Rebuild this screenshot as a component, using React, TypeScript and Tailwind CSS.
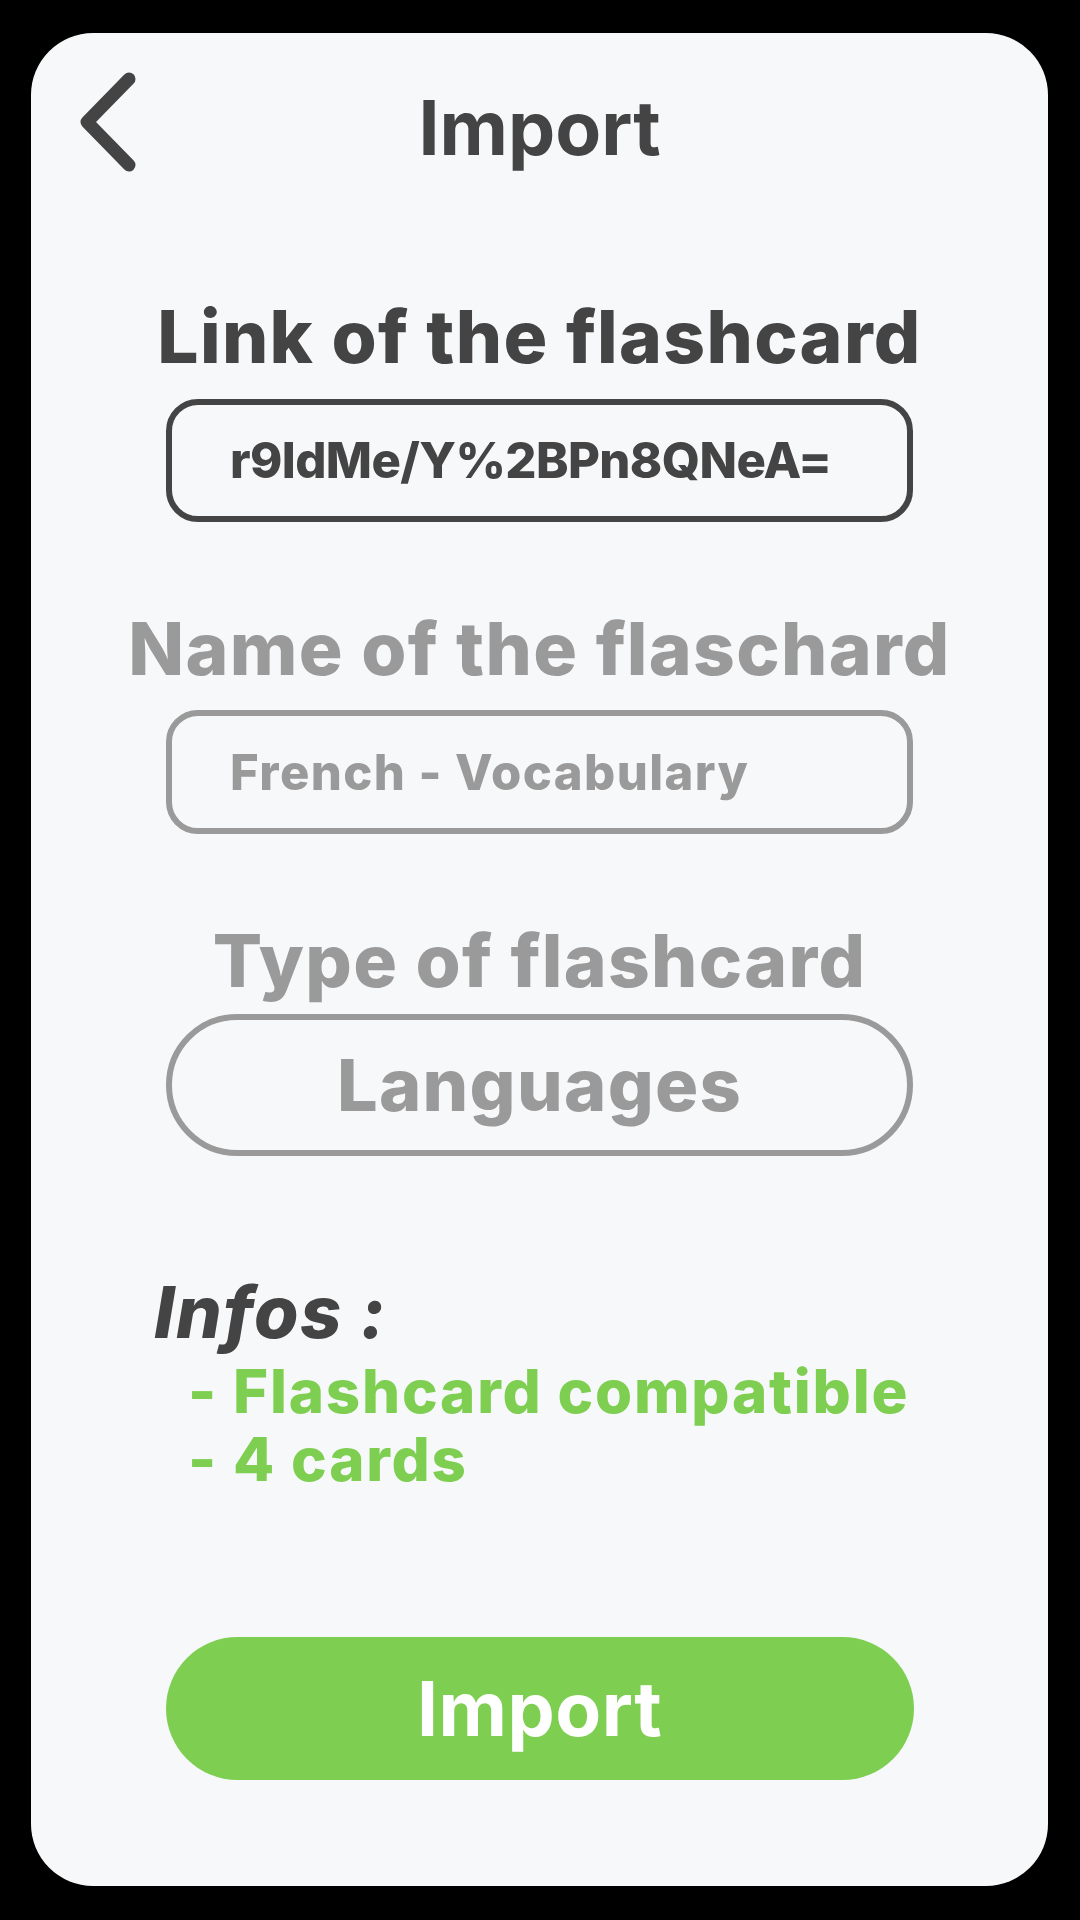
import React from "react";

const dark = "text-[#444444]";
const font = "font-['Inter','Roboto',sans-serif]";
const inputFont = "font-['Inter','Noto_Sans',sans-serif]";

const BackChevron = () => (
  <svg width="80" height="116" viewBox="0 0 80 116" fill="none">
    <polyline
      points="63,15 21,58 63,101"
      stroke="#444444"
      strokeWidth={13}
      strokeLinecap="round"
      strokeLinejoin="round"
    />
  </svg>
);

const App = () => {
  return (
    <div className="w-[1080px] h-[1920px] bg-black pt-[33px] pl-[31px]">
      <div className={`w-[1017px] h-[1853px] bg-[#f7f8fa] rounded-[62px] flex flex-col ${font}`}>
        {/* Header */}
        <div className="grid grid-cols-[1fr_auto_1fr] items-start pt-[31px] pl-[35px] pr-[35px]">
          <div className="flex">
            <BackChevron />
          </div>
          <h1 className={`mt-[26px] text-[75px] leading-none font-bold ${dark}`}>Import</h1>
          <div />
        </div>

        {/* Link */}
        <h2 className={`mt-[120px] text-center text-[73px] leading-none font-extrabold tracking-[1.3px] ${dark}`}>
          Link of the flashcard
        </h2>
        <div className="mt-[26px] mx-auto w-[747px] h-[123px] border-[6px] border-[#444444] rounded-[32px] flex items-center pl-[58px]">
          <span className={`text-[49px] leading-none font-extrabold tracking-[-0.6px] ${dark} ${inputFont}`}>
            r9IdMe/Y%2BPn8QNeA=
          </span>
        </div>

        {/* Name */}
        <h2 className="mt-[90px] text-center text-[73px] leading-none font-extrabold tracking-[1.3px] text-[#9a9a9a]">
          Name of the flaschard
        </h2>
        <div className="mt-[25px] mx-auto w-[747px] h-[124px] border-[6px] border-[#9a9a9a] rounded-[32px] flex items-center pl-[58px]">
          <span className={`text-[49px] leading-none font-extrabold tracking-[1.4px] text-[#9a9a9a] ${inputFont}`}>
            French - Vocabulary
          </span>
        </div>

        {/* Type */}
        <h2 className="mt-[90px] text-center text-[73px] leading-none font-extrabold tracking-[1.3px] text-[#9a9a9a]">
          Type of flashcard
        </h2>
        <div className="mt-[17px] mx-auto w-[747px] h-[142px] border-[6px] border-[#9a9a9a] rounded-full flex items-center justify-center">
          <span className="text-[72px] leading-none font-extrabold tracking-[1.3px] text-[#9a9a9a]">Languages</span>
        </div>

        {/* Infos */}
        <p className={`mt-[120px] ml-[123px] text-[72px] leading-none font-extrabold italic tracking-[1.5px] ${dark}`}>
          Infos :
        </p>
        <ul className="mt-[9px] ml-[157px] text-[60px] leading-[68px] font-extrabold tracking-[1.8px] text-[#7ecf51]">
          <li>- Flashcard compatible</li>
          <li>- 4 cards</li>
        </ul>

        {/* Import button */}
        <button className="mt-[144px] mx-auto w-[748px] h-[143px] rounded-full bg-[#7ecf51] flex items-center justify-center">
          <span className="text-[75px] leading-none font-bold tracking-[0.5px] text-white">Import</span>
        </button>
      </div>
    </div>
  );
};

export default App;
